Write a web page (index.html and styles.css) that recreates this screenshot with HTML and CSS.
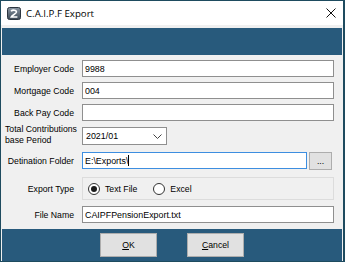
FILE: index.html
```html
<!DOCTYPE html>
<html lang="en">
<head>
  <meta charset="UTF-8">
  <title>C.A.I.P.F Export</title>
  <link rel="stylesheet" href="styles.css">
</head>
<body>

<div class="window">
  <div class="titlebar">
    <svg class="app-icon" width="14" height="13" viewBox="0 0 14 13">
      <defs>
        <linearGradient id="ig" x1="0" y1="0" x2="0" y2="1">
          <stop offset="0" stop-color="#8a96a2"/>
          <stop offset="1" stop-color="#3c4956"/>
        </linearGradient>
      </defs>
      <rect x="0.5" y="0.5" width="13" height="12" rx="2" fill="url(#ig)" stroke="#2c3640"/>
      <path d="M4 4.2 C5.5 2.6 9.8 2.8 9.4 5.2 C9 7.2 5.2 7.6 4.2 10 L10.4 10" fill="none" stroke="#fff" stroke-width="1.6"/>
    </svg>
    <span class="title">C.A.I.P.F Export</span>
    <svg class="close" width="10" height="10" viewBox="0 0 10 10">
      <path d="M0.5 0.5 L9.5 9.5 M9.5 0.5 L0.5 9.5" stroke="#111" stroke-width="1"/>
    </svg>
  </div>

  <div class="header"></div>

  <div class="form">
    <div class="row">
      <label class="label">Employer Code</label>
      <input class="field" type="text" value="9988">
    </div>
    <div class="row">
      <label class="label">Mortgage Code</label>
      <input class="field" type="text" value="004">
    </div>
    <div class="row row-gap">
      <label class="label">Back Pay Code</label>
      <input class="field" type="text" value="">
    </div>
    <div class="row row-combo">
      <label class="label label-wrap">Total Contributions<br>base Period</label>
      <div class="combo">
        <span>2021/01</span>
        <svg width="9" height="5" viewBox="0 0 9 5"><path d="M0.5 0.5 L4.5 4.5 L8.5 0.5" fill="none" stroke="#444" stroke-width="1"/></svg>
      </div>
    </div>
    <div class="row row-combo">
      <label class="label">Detination Folder</label>
      <div class="folder">
        <input class="field field-focus" type="text" value="E:\Exports\">
        <span class="caret"></span>
      </div>
      <button class="browse">...</button>
    </div>
    <div class="row row-group">
      <label class="label">Export Type</label>
      <div class="group">
        <label class="option"><input type="radio" name="type" checked> Text File</label>
        <label class="option"><input type="radio" name="type"> Excel</label>
      </div>
    </div>
    <div class="row row-last">
      <label class="label">File Name</label>
      <input class="field" type="text" value="CAIPFPensionExport.txt">
    </div>
  </div>

  <div class="footer">
    <button class="btn"><u>O</u>K</button>
    <button class="btn"><u>C</u>ancel</button>
  </div>
</div>

</body>
</html>
```

FILE: styles.css
```css
* {
  margin: 0;
  padding: 0;
  box-sizing: border-box;
}
body {
  background-color: #1e4b5f;
  font-family: "Liberation Sans", Arial, sans-serif;
  font-size: 8.7px;
  color: #000;
}
.window {
  width: 342px;
  height: 260px;
  margin: 1px 0 0 1px;
  background-color: #f0f0f0;
  display: flex;
  flex-direction: column;
}
.titlebar {
  height: 24px;
  background-color: #fff;
  display: flex;
  align-items: center;
  padding-left: 6px;
}
.app-icon { margin-right: 5px; }
.title {
  font-family: "Open Sans", "Noto Sans", sans-serif;
  font-size: 9.7px;
  color: #000;
}
.close { margin-left: auto; margin-right: 7px; }
.header {
  height: 27px;
  margin: 3px 1px 0 1px;
  background-color: #285a7c;
}
.form {
  padding: 5px 0 6px 0;
}
.row {
  display: flex;
  align-items: center;
  height: 17px;
  margin-bottom: 5px;
}
.row-gap { margin-bottom: 6px; }
.row-combo { height: 18px; margin-bottom: 7px; }
.row-group { height: 23px; margin-bottom: 6px; }
.row-last { margin-bottom: 0; }
.label {
  width: 69px;
  margin-left: 4px;
  margin-right: 8px;
  text-align: right;
  white-space: nowrap;
}
.label-wrap {
  text-align: left;
  line-height: 10.6px;
  margin-top: -2px;
}
.field {
  width: 252px;
  height: 17px;
  border: 1px solid #8f8f8f;
  background: #fff;
  font-family: inherit;
  font-size: 8.9px;
  padding-left: 2px;
  color: #000;
  outline: none;
}
.folder {
  position: relative;
  height: 17px;
  align-self: flex-start;
}
.field-focus {
  width: 225px;
  border-color: #3d8ee0;
}
.caret {
  position: absolute;
  left: 46px;
  top: 3px;
  width: 1px;
  height: 11px;
  background: #000;
}
.browse {
  width: 23px;
  height: 18px;
  margin-left: 2px;
  background: #e1e1e1;
  border: 1px solid #adadad;
  font-family: inherit;
  font-size: 8.7px;
  color: #000;
}
.combo {
  width: 85px;
  height: 18px;
  border: 1px solid #8f8f8f;
  background: #fff;
  font-size: 8.9px;
  display: flex;
  align-items: center;
  justify-content: space-between;
  padding: 0 4px 0 3px;
}
.group {
  width: 252px;
  height: 23px;
  border: 1px solid #dcdcdc;
  display: flex;
  align-items: center;
  padding-left: 5px;
}
.option {
  display: flex;
  align-items: center;
  gap: 5px;
  margin-right: 16px;
}
.option input {
  appearance: none;
  width: 12px;
  height: 12px;
  border: 1px solid #333;
  border-radius: 50%;
  background: #fff;
  display: flex;
  align-items: center;
  justify-content: center;
}
.option input:checked::after {
  content: "";
  width: 6px;
  height: 6px;
  border-radius: 50%;
  background: #1a1a1a;
}
.footer {
  flex: 1;
  margin: 0 1px;
  background-color: #285a7c;
  display: flex;
  justify-content: center;
  align-items: flex-start;
  gap: 30px;
  padding-top: 4px;
}
.btn {
  width: 57px;
  height: 24px;
  background: #e1e1e1;
  border: 1px solid #adadad;
  font-family: inherit;
  font-size: 8.7px;
  color: #000;
}
```
